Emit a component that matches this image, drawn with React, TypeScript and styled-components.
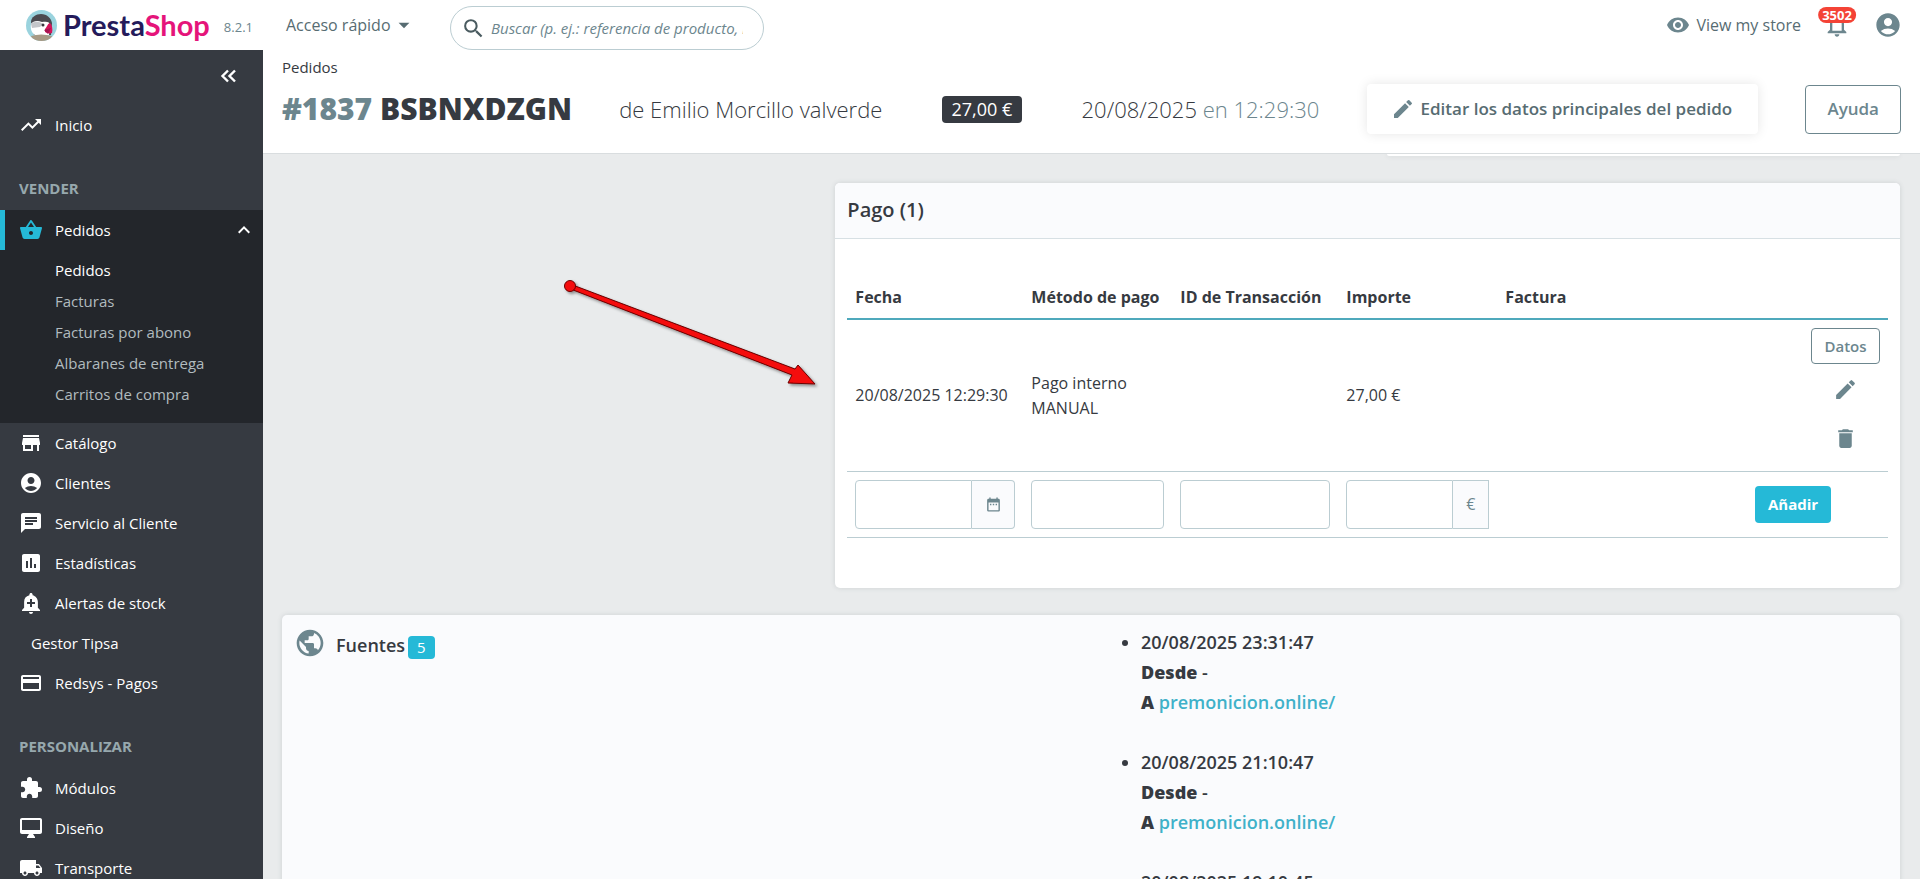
import React from "react";
import styled, { createGlobalStyle, css } from "styled-components";
import {
  MdAccountCircle,
  MdAddAlert,
  MdAssessment,
  MdArrowDropDown,
  MdChat,
  MdCreditCard,
  MdDateRange,
  MdDelete,
  MdEdit,
  MdExtension,
  MdKeyboardArrowUp,
  MdLocalShipping,
  MdNotificationsNone,
  MdPublic,
  MdRemoveRedEye,
  MdSearch,
  MdShoppingBasket,
  MdStore,
  MdTrendingUp,
} from "react-icons/md";

const c = {
  dark: "#363a41",
  darker: "#23262b",
  grey: "#6c868e",
  slate: "#576c72",
  line: "#bbcdd2",
  cyan: "#25b9d7",
  soft: "#fafbfd",
  page: "#e9ebec",
};

const GlobalStyle = createGlobalStyle`
  *, *::before, *::after { box-sizing: border-box; }
  body {
    margin: 0;
    background: ${c.page};
    color: ${c.dark};
    font-family: "Open Sans", "Noto Sans", sans-serif;
    font-size: 15px;
    line-height: 20px;
  }
  button, input { font: inherit; }
  a { text-decoration: none; color: inherit; }
  svg { display: block; flex: none; }
`;

const Shell = styled.div`
  display: flex;
  flex-direction: column;
  height: 100vh;
  overflow: hidden;
`;

const TopBar = styled.header`
  display: flex;
  flex: none;
  align-items: center;
  height: 50px;
  padding-right: 18px;
  background: #fff;
`;

const Brand = styled.a`
  display: flex;
  align-items: center;
  width: 263px;
  padding-left: 26px;
`;

const Wordmark = styled.span`
  margin-left: 6px;
  color: #251b5b;
  font-family: Lato, sans-serif;
  font-size: 29px;
  font-weight: 700;
  line-height: 36px;
`;

const Pink = styled.span`
  color: #e5147a;
`;

const Version = styled.span`
  margin-left: 14px;
  padding-top: 4px;
  color: ${c.grey};
  font-size: 13px;
`;

const QuickAccess = styled.button`
  display: flex;
  align-items: center;
  width: 187px;
  padding: 0 0 0 23px;
  border: 0;
  background: none;
  color: ${c.slate};
  font-size: 16px;
`;

const Search = styled.label`
  display: flex;
  align-items: center;
  align-self: flex-end;
  width: 314px;
  height: 44px;
  padding: 0 20px 0 10px;
  border: 1px solid ${c.line};
  border-radius: 22px;
  color: #4a5b60;
`;

const SearchInput = styled.input`
  flex: 1;
  min-width: 0;
  margin-left: 5px;
  padding: 0;
  border: 0;
  outline: 0;
  background: none;
  &::placeholder {
    color: ${c.grey};
    font-style: italic;
    opacity: 1;
  }
`;

const TopActions = styled.div`
  display: flex;
  align-items: center;
  align-self: flex-start;
  height: 49px;
  margin-left: auto;
  color: ${c.grey};
`;

const StoreLink = styled.a`
  display: flex;
  align-items: center;
  gap: 6px;
  margin-right: 22px;
  color: ${c.slate};
  font-size: 16px;
  svg { color: ${c.grey}; }
`;

const IconButton = styled.button`
  position: relative;
  display: flex;
  align-items: center;
  justify-content: center;
  padding: 0;
  border: 0;
  background: none;
  color: ${c.grey};
`;

const Bell = styled(IconButton)`
  margin-right: 23px;
`;

const AlertCount = styled.span`
  position: absolute;
  top: -4px;
  left: 50%;
  padding: 0 4px;
  border-radius: 8px;
  transform: translateX(-50%);
  background: #f44336;
  color: #fff;
  font-size: 13px;
  font-weight: 700;
  line-height: 16px;
`;

const Body = styled.div`
  display: flex;
  flex: 1;
  min-height: 0;
`;

const Sidebar = styled.nav`
  flex: none;
  width: 263px;
  overflow: hidden;
  background: ${c.dark};
  color: #fff;
`;

const Collapse = styled.button`
  display: block;
  margin: 17px 26px 20px auto;
  padding: 0;
  border: 0;
  background: none;
  color: #fff;
`;

const Section = styled.h2`
  margin: 33px 0 12px;
  padding-left: 19px;
  color: #97a8ad;
  font-size: 15px;
  font-weight: 700;
  line-height: 20px;
`;

const NavList = styled.ul`
  margin: 0;
  padding: 0;
  list-style: none;
`;

const NavLink = styled.a<{ $active?: boolean; $bare?: boolean }>`
  display: flex;
  align-items: center;
  gap: 12px;
  height: 40px;
  padding: 0 7px 0 ${(p) => (p.$bare ? 31 : 19)}px;
  ${(p) =>
    p.$active &&
    css`
      padding-left: 14px;
      border-left: 5px solid ${c.cyan};
      background: ${c.darker};
      & > svg:first-child { color: ${c.cyan}; }
      & > svg:last-child { margin-left: auto; }
    `}
`;

const SubMenu = styled.ul`
  margin: 0;
  padding: 5px 0 13px;
  background: ${c.darker};
  list-style: none;
`;

const SubLink = styled.a<{ $current?: boolean }>`
  display: block;
  padding-left: 55px;
  color: ${(p) => (p.$current ? "#fff" : "#b1bbbf")};
  line-height: 31px;
  white-space: nowrap;
`;

const Main = styled.main`
  display: flex;
  flex: 1;
  flex-direction: column;
  min-width: 0;
  overflow: hidden;
`;

const Toolbar = styled.div`
  flex: none;
  height: 104px;
  padding: 6px 19px 0;
  border-bottom: 1px solid #d9dddf;
  background: #fff;
`;

const Crumb = styled.a`
  display: block;
  line-height: 22px;
`;

const TitleRow = styled.div`
  display: flex;
  align-items: center;
  justify-content: space-between;
  margin-top: 6px;
  white-space: nowrap;
`;

const Title = styled.h1`
  margin: 0;
  font-size: 30px;
  font-weight: 800;
  line-height: 40px;
`;

const Muted = styled.span`
  color: ${c.grey};
`;

const Light = styled.span`
  font-size: 22px;
  font-weight: 300;
  line-height: 30px;
`;

const Amount = styled.span`
  margin: 0 12px;
  padding: 0 10px;
  border-radius: 4px;
  background: ${c.dark};
  color: #fff;
  font-size: 18px;
  line-height: 27px;
`;

const EditOrder = styled.button`
  display: flex;
  align-items: center;
  gap: 6px;
  height: 50px;
  padding: 0 26px 0 24px;
  border: 0;
  border-radius: 4px;
  background: #fff;
  box-shadow: 0 0 12px rgba(0, 0, 0, 0.1);
  color: ${c.slate};
  font-size: 17px;
  font-weight: 600;
  svg { color: ${c.grey}; }
`;

const Outline = styled.button<{ $large?: boolean }>`
  height: ${(p) => (p.$large ? 49 : 36)}px;
  padding: 0 ${(p) => (p.$large ? 21 : 12)}px;
  border: 1px solid ${c.grey};
  border-radius: 4px;
  background: #fff;
  color: ${c.grey};
  font-size: ${(p) => (p.$large ? 17 : 15)}px;
  font-weight: 600;
`;

const Content = styled.div`
  flex: 1;
  min-height: 0;
  overflow: hidden;
  padding: 0 20px 0 19px;
`;

const RightColumn = styled.div`
  display: grid;
  grid-template-columns: 1fr 1fr;
  gap: 27px 38px;
  width: 65.8%;
  margin: 0 0 27px auto;
`;

const Card = styled.section`
  border-radius: 5px;
  background: #fff;
  box-shadow: 0 0 5px rgba(60, 80, 90, 0.16);
`;

const CardTail = styled(Card)`
  grid-column: 2;
  height: 2px;
  border-radius: 0 0 5px 5px;
`;

const PaymentCard = styled(Card)`
  grid-column: 1 / -1;
`;

const CardTitle = styled.h3`
  margin: 0;
  padding: 13px 12px 14px;
  border-bottom: 1px solid #d7e0e4;
  border-radius: 5px 5px 0 0;
  background: ${c.soft};
  font-size: 20px;
  font-weight: 600;
  line-height: 28px;
`;

const CardBody = styled.div`
  padding: 41px 12px 50px;
`;

const Table = styled.table`
  width: 100%;
  border-collapse: separate;
  border-spacing: 0;
  table-layout: fixed;
  font-size: 16px;
  line-height: 25px;
`;

const Th = styled.th<{ $w?: number }>`
  width: ${(p) => (p.$w ? `${p.$w}px` : "auto")};
  padding: 5px 0 8px 8px;
  border-bottom: 2px solid #4fa9bc;
  font-size: 16px;
  font-weight: 700;
  text-align: left;
  white-space: nowrap;
`;

const Td = styled.td<{ $center?: boolean }>`
  padding: 8px;
  border-bottom: 1px solid ${c.line};
  text-align: ${(p) => (p.$center ? "center" : "left")};
  vertical-align: middle;
`;

const DateText = styled.span`
  white-space: nowrap;
`;

const RowActions = styled.div`
  display: flex;
  flex-direction: column;
  align-items: center;
`;

const Datos = styled(Outline)`
  margin-bottom: 1px;
`;

const RowIcon = styled(IconButton)`
  width: 49px;
  height: 49px;
`;

const Group = styled.div`
  display: flex;
  height: 49px;
`;

const Field = styled.input<{ $joined?: boolean }>`
  display: block;
  flex: 1;
  width: 100%;
  min-width: 0;
  height: 49px;
  padding: 0 10px;
  border: 1px solid ${c.line};
  border-radius: ${(p) => (p.$joined ? "4px 0 0 4px" : "4px")};
  background: #fff;
`;

const Addon = styled.span<{ $rounded?: boolean }>`
  display: flex;
  flex: none;
  align-items: center;
  justify-content: center;
  width: ${(p) => (p.$rounded ? 43 : 36)}px;
  border: 1px solid ${c.line};
  border-left: 0;
  border-radius: ${(p) => (p.$rounded ? "0 4px 4px 0" : "0")};
  background: ${c.soft};
  color: ${c.grey};
`;

const Primary = styled.button`
  height: 37px;
  padding: 0 13px;
  border: 0;
  border-radius: 4px;
  background: ${c.cyan};
  color: #fff;
  font-size: 15px;
  font-weight: 700;
`;

const SourceCard = styled(Card)`
  display: grid;
  grid-template-columns: 1fr 1fr;
  padding: 12px;
  background: ${c.soft};
  font-size: 18px;
  line-height: 30px;
`;

const SourceTitle = styled.h3`
  display: flex;
  align-items: center;
  height: 36px;
  margin: 0;
  font-size: 18px;
  font-weight: 600;
  svg { margin: 0 10px 5px 0; color: ${c.grey}; }
`;

const Count = styled.span`
  margin: 4px 0 0 3px;
  padding: 0 9px;
  border-radius: 4px;
  background: ${c.cyan};
  color: #fff;
  font-size: 15px;
  font-weight: 400;
  line-height: 23px;
`;

const SourceList = styled.ul`
  margin: 0;
  padding-left: 50px;
  font-weight: 600;
  b { font-weight: 800; }
`;

const SourceItem = styled.li`
  margin-bottom: 30px;
`;

const Cyan = styled.a`
  color: #3fb1c9;
`;

const Arrow = styled.svg`
  position: absolute;
  top: 270px;
  left: 555px;
  pointer-events: none;
`;

const Puffin = () => (
  <svg width="31" height="31" viewBox="0 0 31 31" aria-hidden="true">
    <defs>
      <clipPath id="disc"><circle cx="15.5" cy="15.5" r="15.5" /></clipPath>
    </defs>
    <g clipPath="url(#disc)">
      <rect width="31" height="31" fill="#9ad3de" />
      <path d="M5 12C5 7 10 4 15 4c6 0 10 4 11 9l-1 12H8z" fill="#4b4a50" />
      <path d="M5 14c2-3 6-4 11-2 5-1 8 0 8 3l-1 10H9C6 23 4 19 5 14z" fill="#fff" />
      <path d="M5 14c3-3 8-3 12 0l-3 3-8 1z" fill="#c4c6ca" />
      <circle cx="17" cy="15" r="1.5" fill="#37363c" />
      <path d="M19 19c2-2 3-6 5-6 2 2 3 6 2 10-3 1-5 0-7-1z" fill="#d4145a" />
      <path d="M18 20l7-2-3 6z" fill="#a5154f" />
      <path d="M5 26q10-3 21 0l-2 6H7z" fill="#a79a85" />
    </g>
  </svg>
);

const Monitor = ({ size = 24 }: { size?: number }) => (
  <svg width={size} height={size} viewBox="0 0 24 24" fill="currentColor" aria-hidden="true">
    <path d="M21 2H3c-1.100 0-2 .9-2 2v12c0 1.100.9 2 2 2h7l-2 3v1h8v-1l-2-3h7c1.100 0 2-.9 2-2V4c0-1.100-.9-2-2-2zm0 12H3V4h18v10z" />
  </svg>
);

const mainItems = [
  { label: "Catálogo", Icon: MdStore },
  { label: "Clientes", Icon: MdAccountCircle },
  { label: "Servicio al Cliente", Icon: MdChat },
  { label: "Estadísticas", Icon: MdAssessment },
  { label: "Alertas de stock", Icon: MdAddAlert },
  { label: "Gestor Tipsa" },
  { label: "Redsys - Pagos", Icon: MdCreditCard },
];

const customItems = [
  { label: "Módulos", Icon: MdExtension },
  { label: "Diseño", Icon: Monitor },
  { label: "Transporte", Icon: MdLocalShipping },
];

const subItems = ["Pedidos", "Facturas", "Facturas por abono", "Albaranes de entrega", "Carritos de compra"];

const sources = ["20/08/2025 23:31:47", "20/08/2025 21:10:47", "20/08/2025 19:10:45"];

type Item = { label: string; Icon?: React.ComponentType<{ size?: number }> };

const Items = ({ items }: { items: Item[] }) => (
  <NavList>
    {items.map(({ label, Icon }) => (
      <li key={label}>
        <NavLink href="#" $bare={!Icon}>
          {Icon && <Icon size={24} />}
          {label}
        </NavLink>
      </li>
    ))}
  </NavList>
);

export default function App() {
  return (
    <Shell>
      <GlobalStyle />
      <TopBar>
        <Brand href="#">
          <Puffin />
          <Wordmark>Presta<Pink>Shop</Pink></Wordmark>
          <Version>8.2.1</Version>
        </Brand>
        <QuickAccess type="button">
          Acceso rápido
          <MdArrowDropDown size={26} />
        </QuickAccess>
        <Search>
          <MdSearch size={25} />
          <SearchInput
            type="text"
            aria-label="Buscar"
            placeholder="Buscar (p. ej.: referencia de producto, nombre de cliente...)"
          />
        </Search>
        <TopActions>
          <StoreLink href="#">
            <MdRemoveRedEye size={24} />
            View my store
          </StoreLink>
          <Bell type="button" aria-label="Notificaciones">
            <MdNotificationsNone size={28} />
            <AlertCount>3502</AlertCount>
          </Bell>
          <IconButton type="button" aria-label="Cuenta">
            <MdAccountCircle size={28} />
          </IconButton>
        </TopActions>
      </TopBar>

      <Body>
        <Sidebar>
          <Collapse type="button" aria-label="Contraer menú">
            <svg width="18" height="18" viewBox="0 0 18 18" fill="none" stroke="#fff" strokeWidth="2.4">
              <path d="M9 3.5L3.5 9L9 14.5M16 3.5L10.500 9L16 14.500" />
            </svg>
          </Collapse>
          <NavList>
            <li><NavLink href="#"><MdTrendingUp size={24} />Inicio</NavLink></li>
          </NavList>
          <Section>VENDER</Section>
          <NavLink href="#" $active>
            <MdShoppingBasket size={24} />
            Pedidos
            <MdKeyboardArrowUp size={24} />
          </NavLink>
          <SubMenu>
            {subItems.map((label, i) => (
              <li key={label}><SubLink href="#" $current={i === 0}>{label}</SubLink></li>
            ))}
          </SubMenu>
          <Items items={mainItems} />
          <Section>PERSONALIZAR</Section>
          <Items items={customItems} />
        </Sidebar>

        <Main>
          <Toolbar>
            <Crumb href="#">Pedidos</Crumb>
            <TitleRow>
              <Title><Muted>#1837</Muted> BSBNXDZGN</Title>
              <Light>de Emilio Morcillo valverde</Light>
              <Amount>27,00 €</Amount>
              <Light>20/08/2025 <Muted>en 12:29:30</Muted></Light>
              <EditOrder type="button">
                <MdEdit size={24} />
                Editar los datos principales del pedido
              </EditOrder>
              <Outline type="button" $large>Ayuda</Outline>
            </TitleRow>
          </Toolbar>

          <Content>
            <RightColumn>
              <CardTail />
              <PaymentCard>
                <CardTitle>Pago (1)</CardTitle>
                <CardBody>
                  <Table>
                    <thead>
                      <tr>
                        <Th $w={176}>Fecha</Th>
                        <Th $w={149}>Método de pago</Th>
                        <Th $w={166}>ID de Transacción</Th>
                        <Th $w={159}>Importe</Th>
                        <Th>Factura</Th>
                        <Th $w={105} aria-label="Estado" />
                        <Th $w={85} aria-label="Acciones" />
                      </tr>
                    </thead>
                    <tbody>
                      <tr>
                        <Td><DateText>20/08/2025 12:29:30</DateText></Td>
                        <Td>Pago interno MANUAL</Td>
                        <Td />
                        <Td>27,00 €</Td>
                        <Td />
                        <Td />
                        <Td>
                          <RowActions>
                            <Datos type="button">Datos</Datos>
                            <RowIcon type="button" aria-label="Editar"><MdEdit size={25} /></RowIcon>
                            <RowIcon type="button" aria-label="Eliminar"><MdDelete size={25} /></RowIcon>
                          </RowActions>
                        </Td>
                      </tr>
                      <tr>
                        <Td>
                          <Group>
                            <Field type="text" aria-label="Fecha" $joined />
                            <Addon $rounded><MdDateRange size={17} /></Addon>
                          </Group>
                        </Td>
                        <Td><Field type="text" aria-label="Método de pago" /></Td>
                        <Td><Field type="text" aria-label="ID de Transacción" /></Td>
                        <Td>
                          <Group>
                            <Field type="text" aria-label="Importe" $joined />
                            <Addon>€</Addon>
                          </Group>
                        </Td>
                        <Td />
                        <Td colSpan={2} $center><Primary type="button">Añadir</Primary></Td>
                      </tr>
                    </tbody>
                  </Table>
                </CardBody>
              </PaymentCard>
            </RightColumn>

            <SourceCard>
              <SourceTitle>
                <MdPublic size={32} />
                Fuentes
                <Count>5</Count>
              </SourceTitle>
              <SourceList>
                {sources.map((date) => (
                  <SourceItem key={date}>
                    {date}
                    <br />
                    <b>Desde</b> -
                    <br />
                    <b>A</b> <Cyan href="#">premonicion.online/</Cyan>
                  </SourceItem>
                ))}
              </SourceList>
            </SourceCard>
          </Content>
        </Main>
      </Body>

      <Arrow width="270" height="130" viewBox="0 0 270 130" aria-hidden="true">
        <defs>
          <filter id="soft" x="-10%" y="-10%" width="120%" height="130%">
            <feDropShadow dx="2" dy="2" stdDeviation="1.5" floodOpacity="0.4" />
          </filter>
        </defs>
        <g filter="url(#soft)" fill="#f40a0a" stroke="#6b0000" strokeWidth="1">
          <path d="M15 14L240 99L243 95L260 114L233 113L237 105L13 18Z" />
          <circle cx="15" cy="16" r="5.500" />
        </g>
      </Arrow>
    </Shell>
  );
}
